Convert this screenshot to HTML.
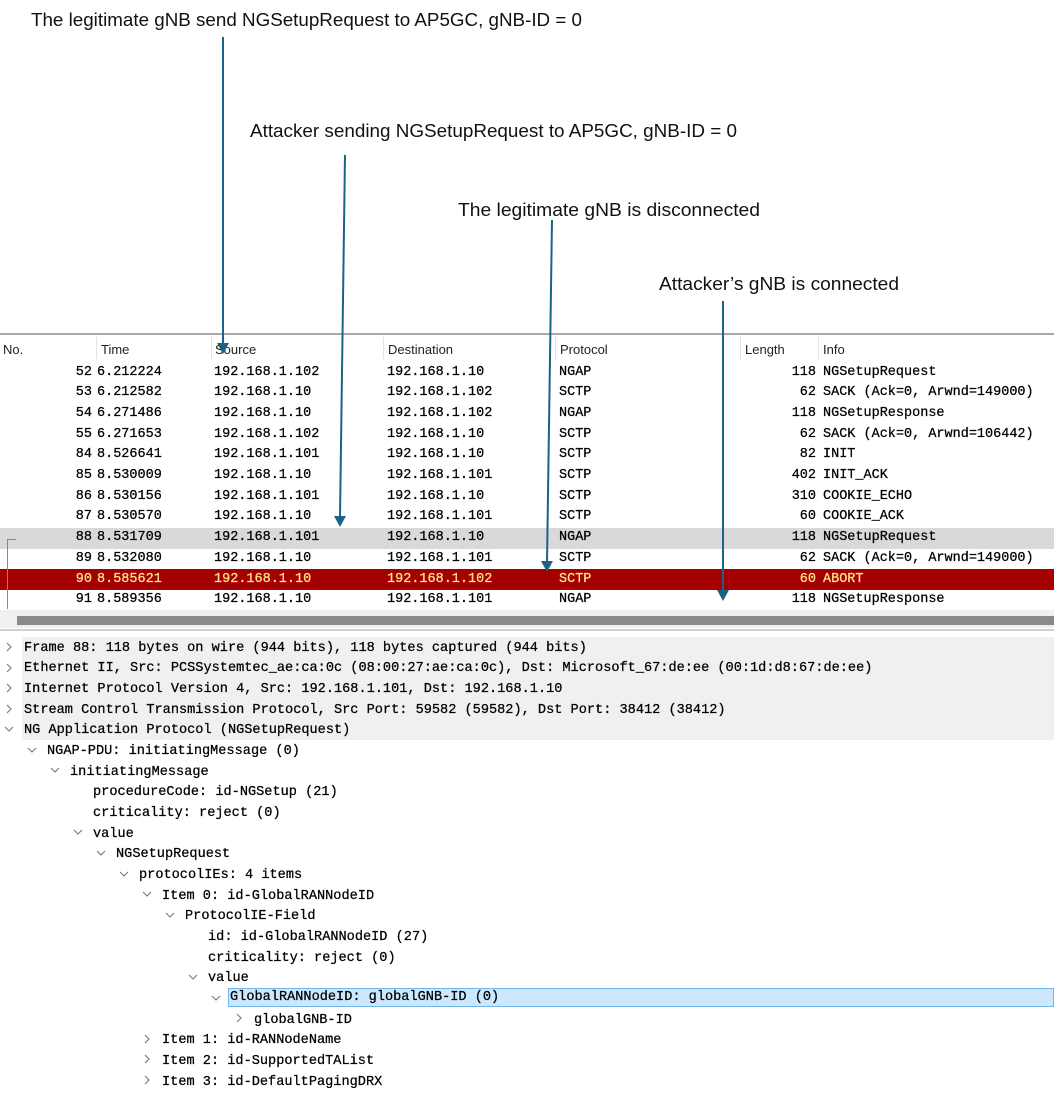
<!DOCTYPE html>
<html><head><meta charset="utf-8"><style>
body{margin:0;width:1054px;height:1099px;position:relative;background:#fff;overflow:hidden}
.m{font-family:"Liberation Mono",monospace;font-size:13.5px;position:absolute;white-space:pre;line-height:20.7px;color:#000;-webkit-text-stroke:0.25px #000}
.d{font-family:"Liberation Mono",monospace;font-size:13.6px;position:absolute;white-space:pre;line-height:20.67px;height:20.67px;color:#000;-webkit-text-stroke:0.25px #000}
.h{font-family:"Liberation Sans",sans-serif;font-size:13px;position:absolute;color:#222;line-height:20px}
.r{position:absolute;left:0;width:1054px;height:21px}
.y{color:#ffe68a;-webkit-text-stroke:0.25px #ffe68a}
</style></head><body>
<svg width="1054" height="1099" style="position:absolute;left:0;top:0" xmlns="http://www.w3.org/2000/svg">
<g font-family="Liberation Sans, sans-serif" font-size="18" fill="#111">
<text x="31" y="26" textLength="551" lengthAdjust="spacingAndGlyphs">The legitimate gNB send NGSetupRequest to AP5GC, gNB-ID = 0</text>
<text x="250" y="137" textLength="487" lengthAdjust="spacingAndGlyphs">Attacker sending NGSetupRequest to AP5GC, gNB-ID = 0</text>
<text x="458" y="216" textLength="302" lengthAdjust="spacingAndGlyphs">The legitimate gNB is disconnected</text>
<text x="659" y="290" textLength="240" lengthAdjust="spacingAndGlyphs">Attacker’s gNB is connected</text>
</g>
</svg>
<div style="position:absolute;left:0;top:333px;width:1054px;height:2px;background:#a8a8a8"></div>
<div style="position:absolute;left:96px;top:337px;width:1px;height:22px;background:#e4e4e4"></div>
<div style="position:absolute;left:211px;top:337px;width:1px;height:22px;background:#e4e4e4"></div>
<div style="position:absolute;left:383px;top:337px;width:1px;height:22px;background:#e4e4e4"></div>
<div style="position:absolute;left:555px;top:337px;width:1px;height:22px;background:#e4e4e4"></div>
<div style="position:absolute;left:740px;top:337px;width:1px;height:22px;background:#e4e4e4"></div>
<div style="position:absolute;left:818px;top:337px;width:1px;height:22px;background:#e4e4e4"></div>
<div class="h" style="left:3px;top:340px">No.</div>
<div class="h" style="left:101px;top:340px">Time</div>
<div class="h" style="left:215px;top:340px">Source</div>
<div class="h" style="left:388px;top:340px">Destination</div>
<div class="h" style="left:560px;top:340px">Protocol</div>
<div class="h" style="left:745px;top:340px">Length</div>
<div class="h" style="left:823px;top:340px">Info</div>

<div class="r" style="top:528px;background:#d9d9d9"></div>
<div class="r" style="top:569px;background:#a40000"></div>
<div style="position:absolute;left:7px;top:539px;width:1px;height:70px;background:#888"></div>
<div style="position:absolute;left:7px;top:539px;width:9px;height:1px;background:#888"></div>

<div class="m" style="left:0;width:92px;text-align:right;top:362.5px">52
53
54
55
84
85
86
87
88
89
<span class="y">90</span>
91</div>
<div class="m" style="left:97px;top:362.5px">6.212224
6.212582
6.271486
6.271653
8.526641
8.530009
8.530156
8.530570
8.531709
8.532080
<span class="y">8.585621</span>
8.589356</div>
<div class="m" style="left:214px;top:362.5px">192.168.1.102
192.168.1.10
192.168.1.10
192.168.1.102
192.168.1.101
192.168.1.10
192.168.1.101
192.168.1.10
192.168.1.101
192.168.1.10
<span class="y">192.168.1.10</span>
192.168.1.10</div>
<div class="m" style="left:387px;top:362.5px">192.168.1.10
192.168.1.102
192.168.1.102
192.168.1.10
192.168.1.10
192.168.1.101
192.168.1.10
192.168.1.101
192.168.1.10
192.168.1.101
<span class="y">192.168.1.102</span>
192.168.1.101</div>
<div class="m" style="left:559px;top:362.5px">NGAP
SCTP
NGAP
SCTP
SCTP
SCTP
SCTP
SCTP
NGAP
SCTP
<span class="y">SCTP</span>
NGAP</div>
<div class="m" style="left:700px;width:116px;text-align:right;top:362.5px">118
62
118
62
82
402
310
60
118
62
<span class="y">60</span>
118</div>
<div class="m" style="left:823px;top:362.5px">NGSetupRequest
SACK (Ack=0, Arwnd=149000)
NGSetupResponse
SACK (Ack=0, Arwnd=106442)
INIT
INIT_ACK
COOKIE_ECHO
COOKIE_ACK
NGSetupRequest
SACK (Ack=0, Arwnd=149000)
<span class="y">ABORT</span>
NGSetupResponse</div>

<div style="position:absolute;left:0;top:610px;width:1054px;height:18px;background:#f0f0f0"></div>
<div style="position:absolute;left:17px;top:616px;width:1037px;height:9px;background:#8a8a8a"></div>
<div style="position:absolute;left:0;top:629px;width:1054px;height:2px;background:#d0d0d0"></div>

<div style="position:absolute;left:22px;top:637px;width:1032px;height:103px;background:#f0f0f0"></div>
<div style="position:absolute;left:228px;top:988px;width:826px;height:19px;background:#cce8ff;border:1px solid #6fb6ea;box-sizing:border-box"></div>
<svg width="1054" height="1099" style="position:absolute;left:0;top:0" xmlns="http://www.w3.org/2000/svg" fill="none" stroke="#777" stroke-width="1.1">
<polyline points="7,643 11,647 7,651"/>
<polyline points="7,664 11,668 7,672"/>
<polyline points="7,684 11,688 7,692"/>
<polyline points="7,705 11,709 7,713"/>
<polyline points="5,727 9,731 13,727"/>
<polyline points="28,748 32,752 36,748"/>
<polyline points="51,768 55,772 59,768"/>
<polyline points="74,830 78,834 82,830"/>
<polyline points="97,851 101,855 105,851"/>
<polyline points="120,872 124,876 128,872"/>
<polyline points="143,892 147,896 151,892"/>
<polyline points="166,913 170,917 174,913"/>
<polyline points="189,975 193,979 197,975"/>
<polyline points="212,996 216,1000 220,996"/>
<polyline points="237,1014 241,1018 237,1022"/>
<polyline points="145,1035 149,1039 145,1043"/>
<polyline points="145,1055 149,1059 145,1063"/>
<polyline points="145,1076 149,1080 145,1084"/>
</svg>
<div class="d" style="left:24px;top:638.5px">Frame 88: 118 bytes on wire (944 bits), 118 bytes captured (944 bits)</div>
<div class="d" style="left:24px;top:659.2px">Ethernet II, Src: PCSSystemtec_ae:ca:0c (08:00:27:ae:ca:0c), Dst: Microsoft_67:de:ee (00:1d:d8:67:de:ee)</div>
<div class="d" style="left:24px;top:679.8px">Internet Protocol Version 4, Src: 192.168.1.101, Dst: 192.168.1.10</div>
<div class="d" style="left:24px;top:700.5px">Stream Control Transmission Protocol, Src Port: 59582 (59582), Dst Port: 38412 (38412)</div>
<div class="d" style="left:24px;top:721.2px">NG Application Protocol (NGSetupRequest)</div>
<div class="d" style="left:47px;top:741.9px">NGAP-PDU: initiatingMessage (0)</div>
<div class="d" style="left:70px;top:762.5px">initiatingMessage</div>
<div class="d" style="left:93px;top:783.2px">procedureCode: id-NGSetup (21)</div>
<div class="d" style="left:93px;top:803.9px">criticality: reject (0)</div>
<div class="d" style="left:93px;top:824.5px">value</div>
<div class="d" style="left:116px;top:845.2px">NGSetupRequest</div>
<div class="d" style="left:139px;top:865.9px">protocolIEs: 4 items</div>
<div class="d" style="left:162px;top:886.5px">Item 0: id-GlobalRANNodeID</div>
<div class="d" style="left:185px;top:907.2px">ProtocolIE-Field</div>
<div class="d" style="left:208px;top:927.9px">id: id-GlobalRANNodeID (27)</div>
<div class="d" style="left:208px;top:948.5px">criticality: reject (0)</div>
<div class="d" style="left:208px;top:969.2px">value</div>
<div class="d" style="left:230px;top:988.4px">GlobalRANNodeID: globalGNB-ID (0)</div>
<div class="d" style="left:254px;top:1010.5px">globalGNB-ID</div>
<div class="d" style="left:162px;top:1031.2px">Item 1: id-RANNodeName</div>
<div class="d" style="left:162px;top:1051.9px">Item 2: id-SupportedTAList</div>
<div class="d" style="left:162px;top:1072.5px">Item 3: id-DefaultPagingDRX</div>

<svg width="1054" height="1099" style="position:absolute;left:0;top:0" xmlns="http://www.w3.org/2000/svg">
<g stroke="#1b6385" stroke-width="2" fill="#1b6385">
<line x1="223" y1="37" x2="223" y2="345"/><polygon points="217,343 229,343 223,354" stroke="none"/>
<line x1="345" y1="155" x2="340" y2="518"/><polygon points="334,516 346,516 340,527" stroke="none"/>
<line x1="552" y1="220" x2="547" y2="563"/><polygon points="541,561 553,561 547,572" stroke="none"/>
<line x1="723" y1="301" x2="723" y2="592"/><polygon points="717,590 729,590 723,601" stroke="none"/>
</g>
</svg>
</body></html>
